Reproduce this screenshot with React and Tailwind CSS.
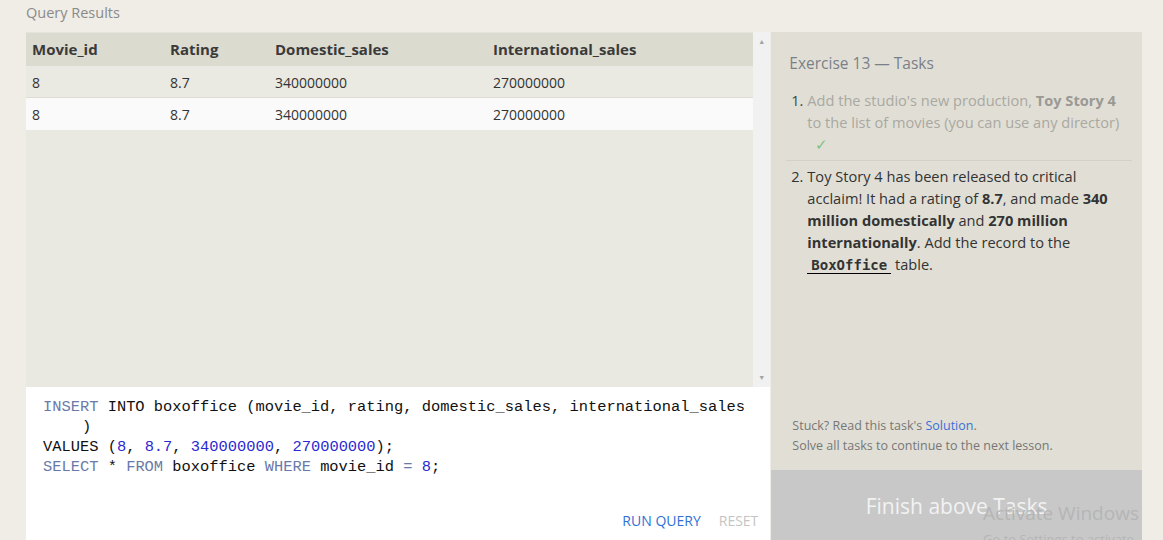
import React from "react";

const rows = [
  { id: "8", rating: "8.7", dom: "340000000", intl: "270000000" },
  { id: "8", rating: "8.7", dom: "340000000", intl: "270000000" },
];

const sans = { fontFamily: '"Open Sans", "Noto Sans", sans-serif' };

const App = () => {
  return (
    <div
      className="relative w-[1163px] h-[540px] overflow-hidden bg-[#efede6] text-[#333]"
      style={sans}
    >
      <div className="h-[32px] pl-[26px] pt-[2px] text-[14.5px] text-[#8a8a8a]">
        Query Results
      </div>

      <div className="flex h-[508px] pl-[26px] pr-[21px]">
        {/* left: results + editor */}
        <div className="flex w-[745px] flex-col">
          <div className="flex h-[355px] bg-[#e9e8e1]">
            <div className="flex-1">
              <div className="flex h-[34px] items-center border-t border-[#e4e3dc] bg-[#dcdbd0] text-[15px] font-bold text-[#3a3a3a]">
                <div className="w-[144px] pl-[6px]">Movie_id</div>
                <div className="w-[105px]">Rating</div>
                <div className="w-[218px]">Domestic_sales</div>
                <div>International_sales</div>
              </div>
              {rows.map((r, i) => (
                <div
                  key={i}
                  className={
                    "flex h-[32px] items-center text-[14px] text-[#333] " +
                    (i === 0 ? "bg-[#eae9e2] border-b border-[#dedcd4] pt-[1px]" : "bg-[#fafafa]")
                  }
                >
                  <div className="w-[144px] pl-[6px]">{r.id}</div>
                  <div className="w-[105px]">{r.rating}</div>
                  <div className="w-[218px]">{r.dom}</div>
                  <div>{r.intl}</div>
                </div>
              ))}
            </div>
            <div className="flex w-[17px] flex-col items-center justify-between bg-[#f1f1f1] py-[6px] text-[7px] leading-none text-[#a3a3a3]">
              <span>▲</span>
              <span>▼</span>
            </div>
          </div>

          <div
            className="relative flex-1 whitespace-nowrap bg-white px-[17px] pt-[10px] text-[15.4px] leading-[20px] text-[#111]"
            style={{ fontFamily: '"Liberation Mono", "DejaVu Sans Mono", monospace' }}
          >
            <div>
              <span className="text-[#6a7aa8]">INSERT</span> INTO boxoffice (movie_id, rating, domestic_sales, international_sales
            </div>
            <div className="pl-[39px]">)</div>
            <div>
              VALUES (<span className="text-[#2a2ad0]">8</span>, <span className="text-[#2a2ad0]">8.7</span>,{" "}
              <span className="text-[#2a2ad0]">340000000</span>, <span className="text-[#2a2ad0]">270000000</span>);
            </div>
            <div>
              <span className="text-[#6a7aa8]">SELECT</span> * <span className="text-[#6a7aa8]">FROM</span> boxoffice{" "}
              <span className="text-[#6a7aa8]">WHERE</span> movie_id <span className="text-[#6a7aa8]">=</span>{" "}
              <span className="text-[#2a2ad0]">8</span>;
            </div>
            <div
              className="absolute bottom-[9px] right-[12px] flex gap-[18px] text-[14px]"
              style={sans}
            >
              <span className="text-[#2f6fd6]">RUN QUERY</span>
              <span className="text-[#c4c4c4]">RESET</span>
            </div>
          </div>
        </div>

        {/* right: tasks */}
        <div className="ml-[1px] flex w-[371px] flex-col bg-[#e1dfd5]">
          <div className="flex-1 pl-[15px] pr-[10px] pt-[20px]">
            <div className="pl-[3px] text-[15.5px] text-[#7a7f8a]">Exercise 13 — Tasks</div>
            <ol className="mt-[14px] text-[14.6px] leading-[22px]">
              <li className="flex border-b border-[#d3d1c6] pb-[5px]">
                <span className="w-[17px] shrink-0 text-right text-[#444]">1.</span>
                <div className="pl-[4px] text-[#a9a8a2]">
                  Add the studio's new production, <b className="text-[#9a9994]">Toy Story 4</b> to the list of movies (you can use any director)
                  <div className="pl-[8px] text-[#7cc47c]">✓</div>
                </div>
              </li>
              <li className="flex pt-[4px]">
                <span className="w-[17px] shrink-0 text-right">2.</span>
                <div className="w-[322px] pl-[4px] text-[#333]">
                  Toy Story 4 has been released to critical acclaim! It had a rating of <b>8.7</b>, and made{" "}
                  <b>340 million domestically</b> and <b>270 million internationally</b>. Add the record to the{" "}
                  <code
                    className="border-b border-black px-[4px] text-[14px] font-bold"
                    style={{ fontFamily: '"DejaVu Sans Mono", "Liberation Mono", monospace' }}
                  >
                    BoxOffice
                  </code>{" "}
                  table.
                </div>
              </li>
            </ol>
          </div>
          <div className="px-[21px] pb-[14px] text-[12.5px] leading-[20px] text-[#777]">
            <div>
              Stuck? Read this task's <span className="text-[#3a6fd8]">Solution</span>.
            </div>
            <div>Solve all tasks to continue to the next lesson.</div>
          </div>
          <div className="flex h-[70px] items-center justify-center pt-[3px] text-[21px] text-[#f2f2f2] bg-[#c8c8c8]">
            Finish above Tasks
          </div>
        </div>
      </div>

      {/* OS watermark overlay */}
      <div className="pointer-events-none absolute left-[983px] top-[500px] text-[19px] leading-[26px] text-[#b5b5b5]">
        <div>Activate Windows</div>
        <div className="text-[13px]">Go to Settings to activate Windows.</div>
      </div>
    </div>
  );
};

export default App;
